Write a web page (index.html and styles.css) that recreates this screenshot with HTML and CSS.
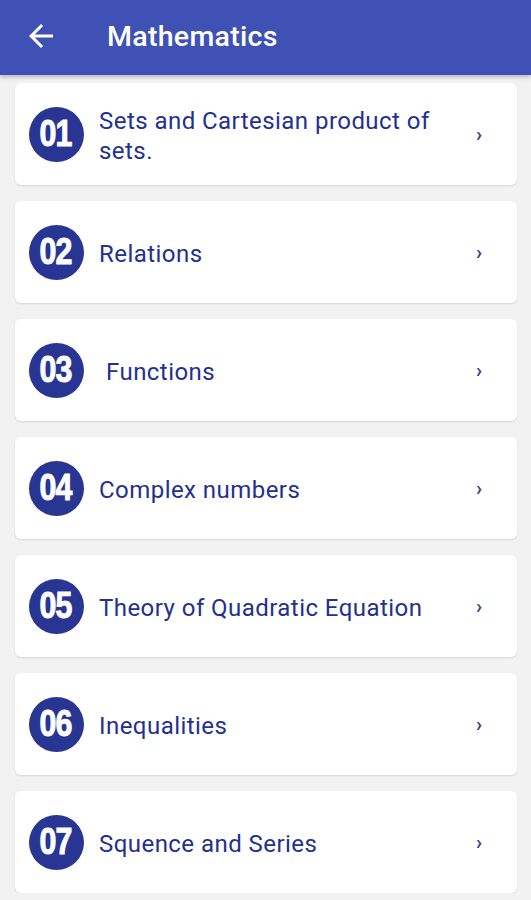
FILE: index.html
```html
<!DOCTYPE html>
<html>
<head>
<meta charset="utf-8">
<link rel="stylesheet" href="styles.css">
</head>
<body>
<header class="appbar">
  <svg class="back" viewBox="0 0 24 24" width="36" height="36"><path d="M20 11H7.83l5.59-5.59L12 4l-8 8 8 8 1.41-1.41L7.83 13H20v-2z" fill="#fff"/></svg>
  <h1 class="title">Mathematics</h1>
</header>
<main class="list">
  <div class="card"><div class="num"><span>01</span></div><div class="label">Sets and Cartesian product of sets.</div><span class="chev">›</span></div>
  <div class="card"><div class="num"><span>02</span></div><div class="label">Relations</div><span class="chev">›</span></div>
  <div class="card"><div class="num"><span>03</span></div><div class="label indent">Functions</div><span class="chev">›</span></div>
  <div class="card"><div class="num"><span>04</span></div><div class="label">Complex numbers</div><span class="chev">›</span></div>
  <div class="card"><div class="num"><span>05</span></div><div class="label">Theory of Quadratic Equation</div><span class="chev">›</span></div>
  <div class="card"><div class="num"><span>06</span></div><div class="label">Inequalities</div><span class="chev">›</span></div>
  <div class="card"><div class="num"><span>07</span></div><div class="label">Squence and Series</div><span class="chev">›</span></div>
</main>
</body>
</html>
```
FILE: styles.css
```css
html, body {
  margin: 0;
  padding: 0;
  background: #f2f2f2;
  font-family: Roboto, "Liberation Sans", sans-serif;
  overflow: hidden;
}
.appbar {
  height: 75px;
  background: #3f51b5;
  display: flex;
  align-items: center;
  box-shadow: 0 2px 4px rgba(0,0,0,0.25);
  position: relative;
  z-index: 1;
}
.back {
  margin-left: 23px;
  margin-top: -3px;
  flex: none;
}
.title {
  margin: -2px 0 0 48px;
  color: #fff;
  font-size: 28.5px;
  font-weight: 500;
  letter-spacing: 0.3px;
}
.list {
  padding: 8px 14px 0 15px;
  display: flex;
  flex-direction: column;
  gap: 16px;
}
.card {
  height: 102px;
  background: #fff;
  border-radius: 6px;
  box-shadow: 0 1px 2px rgba(0,0,0,0.12);
  display: flex;
  align-items: center;
  padding: 0 35px 0 14px;
}
.num {
  width: 55px;
  height: 55px;
  border-radius: 50%;
  background: #283593;
  color: #fff;
  flex: none;
  display: flex;
  align-items: center;
  justify-content: center;
  font-family: "Liberation Sans", sans-serif;
  font-weight: 700;
  font-size: 37px;
  letter-spacing: -1px;
}
.num span {
  display: inline-block;
  transform: scaleX(0.82);
  -webkit-text-stroke: 1px #fff;
  margin-left: -1px;
}
.label {
  flex: 1;
  margin-left: 15px;
  margin-right: 20px;
  padding-top: 3px;
  color: #24308f;
  font-size: 24px;
  line-height: 30px;
  letter-spacing: 0.45px;
}
.label.indent {
  margin-left: 22px;
}
.chev {
  color: #3c4390;
  font-size: 20px;
  font-weight: 700;
  flex: none;
}
```
